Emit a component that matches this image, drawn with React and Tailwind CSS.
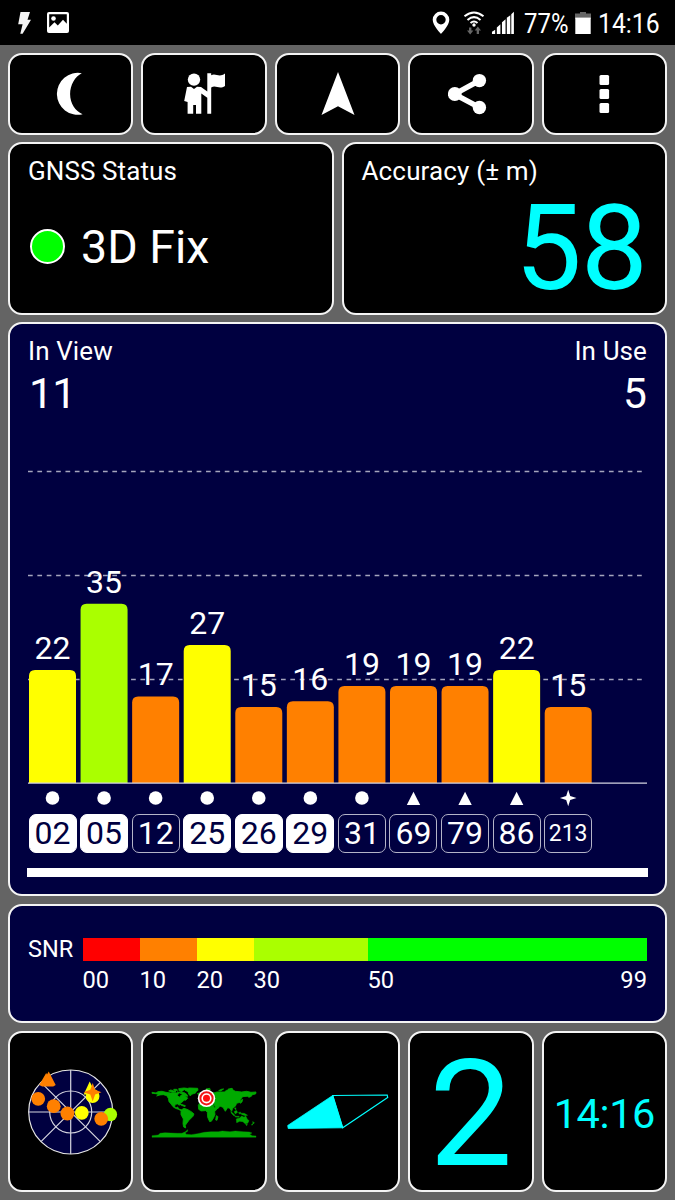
import React from "react";

const CARD = "rounded-[14px] border-2 border-[#f4f4f4]";
const ORANGE = "#ff8000";
const YELLOW = "#ffff00";
const LIME = "#aaff00";

const SATS = [
  { id: "02", snr: 22, top: 670, color: YELLOW, kind: "dot", used: true },
  { id: "05", snr: 35, top: 603.7, color: LIME, kind: "dot", used: true },
  { id: "12", snr: 17, top: 696.4, color: ORANGE, kind: "dot", used: false },
  { id: "25", snr: 27, top: 645, color: YELLOW, kind: "dot", used: true },
  { id: "26", snr: 15, top: 707, color: ORANGE, kind: "dot", used: true },
  { id: "29", snr: 16, top: 701.2, color: ORANGE, kind: "dot", used: true },
  { id: "31", snr: 19, top: 686, color: ORANGE, kind: "dot", used: false },
  { id: "69", snr: 19, top: 686, color: ORANGE, kind: "tri", used: false },
  { id: "79", snr: 19, top: 686, color: ORANGE, kind: "tri", used: false },
  { id: "86", snr: 22, top: 670, color: YELLOW, kind: "tri", used: false },
  { id: "213", snr: 15, top: 707, color: ORANGE, kind: "star", used: false },
];

function StatusBar() {
  return (
    <div className="flex h-[45px] items-center bg-black text-white">
      <svg className="ml-[17px] h-[24px] w-[16px]" viewBox="0 0 16 24" fill="#f4f4f4">
        <path d="M3.5 1H13L10.5 8.7H14L5.6 22.8H3.3L5.6 13.2H1.2Z" />
      </svg>
      <svg className="ml-[13px] h-[24px] w-[24px]" viewBox="0 0 24 24">
        <rect x="1" y="1" width="22" height="21" rx="2" fill="#fff" />
        <path d="M3.2 3.2H20.8V12.8L17 8.8L11.8 14.6L8.5 11.2L3.2 16.5Z" fill="#000" />
        <circle cx="7.5" cy="7.5" r="2.3" fill="#fff" />
      </svg>
      <div className="grow" />
      <svg className="h-[24px] w-[18px]" viewBox="0 0 18 24">
        <path fillRule="evenodd" fill="#fff" d="M9 .5a8.3 8.3 0 0 0-8.3 8.3C.7 14.6 9 23 9 23s8.300-8.400 8.300-14.200A8.300 8.300 0 0 0 9 .5ZM9 4.100a4.700 4.700 0 1 1 0 9.400a4.700 4.700 0 0 1 0-9.400Z" />
      </svg>
      <svg className="ml-[13px] h-[24px] w-[22px]" viewBox="0 0 22 24" fill="none">
        <g stroke="#fff" strokeWidth="2">
          <path d="M1.500 5.300Q11-2.300 20.500 5.300" />
          <path d="M4.500 8.900Q11 3.400 17.500 8.900" />
          <path d="M7.500 12.100Q11 9 14.500 12.100" />
        </g>
        <circle cx="11" cy="14" r="1.700" fill="#fff" />
        <g fill="#666">
          <path d="M6 16.500h2.400v3h2L7.200 23.500L4 19.500h2z" />
          <path d="M13.700 23v-3.500h-2l3.100-4l3.200 4h-2V23z" />
        </g>
      </svg>
      <svg className="ml-[6px] h-[24px] w-[24px]" viewBox="0 0 24 24" fill="#fff">
        <path d="M1 23v-2.200l3.300-2V23zM6 23v-6.500l3.700-3.300V23zM11.300 23V11.200l3.700-3V23zM16.300 23V6.800l3.600-2.600V23zM20.900 23V3.200L23.600 .8V23z" transform="scale(.97 1)" />
      </svg>
      <div className="ml-[8.500px] w-[45px] pt-[2px] text-[27.500px] leading-[43px]">
        <div className="w-[55px] origin-left scale-x-[0.87]">77%</div>
      </div>
      <svg className="ml-[6px] h-[24px] w-[16px]" viewBox="0 0 16 24">
        <path d="M5 1h6v1.500h5V8H0V2.500h5z" fill="#666" />
        <path d="M.3 6.600h15.400V23H.3z" fill="#fff" />
      </svg>
      <div className="mr-[15.500px] ml-[7px] w-[62px] pt-[2px] text-[27.500px] leading-[43px]">
        <div className="w-[70px] origin-left scale-x-[0.9]">14:16</div>
      </div>
    </div>
  );
}

function Toolbar() {
  const cell = CARD + " flex flex-1 items-center justify-center bg-black";
  return (
    <div className="flex h-[82px] gap-2">
      <div className={cell}>
        <svg className="h-[46px] w-[46px]" viewBox="47.700 71 46 46">
          <path d="M81.500 73.200A21 21 0 1 0 82.300 114.300C75 111 69.800 103.500 69.800 94C69.800 84.800 74.800 76.500 81.500 73.200Z" fill="#fff" />
        </svg>
      </div>
      <div className={cell}>
        <svg className="h-[46px] w-[46px]" viewBox="181 71 46 46" fill="#fff">
          <circle cx="194" cy="79.600" r="6.200" />
          <path d="M187 87L191 86.700L194 89L197 86.700L201 87L207.300 91.500V73.300H211.200V75.200C216 73 219 78 225 73.600V86C219 90 216 84.500 211.200 87.500V113.800H207.300V97.700L201.300 93.500V113.800H196V105H193.200V113.800H187.600V102L184.200 101Z" />
        </svg>
      </div>
      <div className={cell}>
        <svg className="h-[46px] w-[46px]" viewBox="314.500 71 46 46">
          <path d="M337.500 72L354 115L337.500 106.300L321 115Z" fill="#fff" />
        </svg>
      </div>
      <div className={cell}>
        <svg className="h-[46px] w-[46px]" viewBox="448 71 46 46" fill="#fff">
          <path d="M479.300 80.600L454.500 94.200L479.300 107.300" fill="none" stroke="#fff" strokeWidth="5.400" />
          <circle cx="479.400" cy="80.600" r="6.700" />
          <circle cx="454.800" cy="94" r="6.900" />
          <circle cx="479.400" cy="107.500" r="6.700" />
        </svg>
      </div>
      <div className={cell}>
        <svg className="h-[46px] w-[46px]" viewBox="581.500 71 46 46" fill="#fff">
          <rect x="600" y="75" width="9.600" height="10" rx="1.500" />
          <rect x="600" y="89" width="9.600" height="10" rx="1.500" />
          <rect x="600" y="103" width="9.600" height="10" rx="1.500" />
        </svg>
      </div>
    </div>
  );
}

function Marker({ kind, x }) {
  if (kind === "dot") return <circle cx={x} cy="798" r="6.800" fill="#fff" />;
  if (kind === "tri") return <path transform={`translate(${x} 798)`} d="M0-6.300L6.700 7H-6.700Z" fill="#fff" />;
  return <path transform={`translate(${x} 798)`} d="M0-8.300L2-2L8.300 0L2 2L0 8.300L-2 2L-8.300 0L-2-2Z" fill="#fff" />;
}

function Chart() {
  return (
    <svg className="block h-[390px] w-[655px] shrink-0" viewBox="10 420 655 390">
      {[471.500, 575.500, 679.500].map((y) => (
        <path key={y} d={`M28 ${y}H643`} stroke="#a5a5bd" strokeWidth="1.500" strokeDasharray="4.700 4.670" />
      ))}
      <g fontFamily="Roboto, sans-serif" fontSize="32" fill="#fff" textAnchor="middle">
        {SATS.map((s, i) => {
          const x = 29 + i * 51.570;
          return (
            <g key={s.id}>
              <path d={`M${x} 783V${s.top + 6}q0-6 6-6h35q6 0 6 6V783z`} fill={s.color} />
              <text x={x + 23.500} y={s.top - 11}>{s.snr}</text>
              <Marker kind={s.kind} x={x + 23.500} />
            </g>
          );
        })}
      </g>
      <path d="M28 783.200H647" stroke="#d5d5e2" strokeWidth="1.200" />
    </svg>
  );
}

function SatPanel() {
  return (
    <div className={CARD + " flex h-[574px] flex-col bg-[#000040]"}>
      <div className="flex justify-between px-[18px] pt-[11px]">
        <div>
          <div className="text-[26px] leading-[32px] tracking-[0.1px]">In View</div>
          <div className="pl-[1px] text-[43px] leading-[53px] tracking-[-0.800px]">11</div>
        </div>
        <div className="text-right">
          <div className="text-[26px] leading-[32px] tracking-[0.1px]">In Use</div>
          <div className="text-[42.500px] leading-[53px]">5</div>
        </div>
      </div>
      <Chart />
      <div className="mt-[4px] flex gap-[3.570px] pl-[18.500px]">
        {SATS.map((s) => (
          <div
            key={s.id}
            className={
              "flex h-[39px] w-[48px] shrink-0 items-center justify-center rounded-[7px] border leading-[37px] " +
              (s.used ? "border-white bg-white text-[#000040] " : "border-[#b4b4c8] text-white ") +
              (s.id.length > 2 ? "text-[23px]" : "text-[32px]")
            }
          >
            {s.id}
          </div>
        ))}
      </div>
      <div className="mx-[17px] mt-[15px] h-[8.500px] bg-white" />
    </div>
  );
}

function SnrPanel() {
  return (
    <div className={CARD + " flex h-[119px] bg-[#000040] pt-[32px] pl-[18px] text-[23.700px] leading-[24px]"}>
      <div className="w-[54.500px] text-[23.500px] leading-[22px]">SNR</div>
      <div className="w-[564.500px]">
        <div className="flex h-[23px]">
          <div className="w-[57px] bg-[#ff0000]" />
          <div className="w-[57px] bg-[#ff8000]" />
          <div className="w-[57px] bg-[#ffff00]" />
          <div className="w-[114px] bg-[#aaff00]" />
          <div className="grow bg-[#00ff00]" />
        </div>
        <div className="flex pt-[7px] leading-[24px]">
          <div className="w-[57px]">00</div>
          <div className="w-[57px]">10</div>
          <div className="w-[57px]">20</div>
          <div className="w-[114px]">30</div>
          <div className="grow">50</div>
          <div>99</div>
        </div>
      </div>
    </div>
  );
}

function SkyPlot() {
  return (
    <svg className="h-[100px] w-[110px]" viewBox="15.800 1061.500 110 100">
      <circle cx="70.500" cy="1111.500" r="42" fill="#000040" stroke="#e6e6e6" strokeWidth="1.200" />
      <g fill="none" stroke="#d5d5df" strokeWidth="1.200">
        <circle cx="70.500" cy="1111.500" r="21" />
        <path d="M28.500 1111.500h84M70.500 1069.500v84M40.800 1081.800l59.400 59.400M40.800 1141.200l59.400-59.400" />
      </g>
      <g fill={ORANGE}>
        <path d="M39 1084.500L46 1072.500L46.800 1074L48.500 1071L55.500 1084.500L53 1086H42Z" />
        <circle cx="38" cy="1098.300" r="6.900" />
        <circle cx="53.500" cy="1105.700" r="6.900" />
        <circle cx="67.200" cy="1113" r="6.900" />
      </g>
      <circle cx="110.200" cy="1114" r="6.700" fill={LIME} />
      <circle cx="101" cy="1118.300" r="6.900" fill={ORANGE} />
      <circle cx="81.600" cy="1112.300" r="6.900" fill={YELLOW} />
      <circle cx="92.400" cy="1095.500" r="6.900" fill={YELLOW} />
      <path d="M89.500 1081L96 1094H83.500Z" fill={YELLOW} />
      <path d="M92.500 1082.500L94.900 1089.300L101.300 1091.700L94.900 1094.100L92.500 1101L90.100 1094.100L83.200 1091.700L90.100 1089.300Z" fill={ORANGE} />
    </svg>
  );
}

function WorldMap() {
  return (
    <svg className="h-[80px] w-[110px]" viewBox="9 1.700 110 80">
      <g transform="scale(.33333)" fill="#00aa00" stroke="#00aa00" strokeWidth="2.500">
        <path d="M36 66L48 68L54 64L66 63L78 66L92 68L106 67L116 69L112 75L118 81L124 74L130 73L140 80L143 84L137 90L132 89L128 94L122 98L120 101L118 105L113 101L106 102L104 108L108 113L113 110L116 116L123 118L128 121L123 121L115 117L106 114L99 109L93 101L87 94L85 84L80 76L70 73L60 74L50 77L55 72L46 70L36 69Z" />
        <path d="M86 62L92 59L100 61L108 64L98 66ZM101 57L110 57L113 60L104 61ZM116 55L132 53L140 54L131 59L126 64L118 62ZM111 65L120 66L133 67L141 73L143 78L134 76L124 70ZM136 56L148 53L173 54L174 60L168 64L167 68L155 72L151 77L146 71L144 64L135 60Z" />
        <path d="M172 70L179 68L181 72L176 73ZM121 101L130 104L136 106L135 109L122 104Z" />
        <path d="M125 118L132 114L141 117L149 121L158 127L162 131L159 138L154 143L147 150L141 158L136 165L137 173L131 170L129 160L130 146L123 133L123 124Z" />
        <path d="M175 105L179 98L186 95L198 97L207 99L217 99L223 112L233 114L224 124L225 133L220 144L214 153L209 154L203 141L202 126L197 121L183 122L176 117ZM229 136L234 139L231 150L227 149Z" />
        <path d="M179 94L182 87L186 82L195 76L200 69L209 63L221 68L231 65L241 65L253 65L260 60L273 56L286 63L305 65L320 63L333 66L348 65L347 71L337 73L334 78L327 81L322 78L308 79L301 88L300 96L290 99L286 108L278 114L275 123L269 114L263 112L256 123L249 111L239 107L236 113L229 116L222 102L213 98L202 92L193 91L186 96Z" />
        <path d="M236 61L244 57L251 56L242 62ZM198 56L209 54L211 58L202 59ZM264 57L276 54L279 57ZM303 90L308 87L306 95L301 99Z" />
        <path d="M272 123L279 129L286 136L281 136L274 129ZM282 124L289 120L293 126L286 131ZM295 127L302 125L300 132ZM299 128L313 129L323 135L316 136L306 133ZM284 138L298 138L296 141L286 140ZM283 114L288 112L288 119Z" strokeWidth="1" />
        <path d="M289 146L299 143L305 137L312 141L317 137L322 147L327 151L323 159L315 160L309 154L299 153L290 157ZM317 162L322 162L320 166ZM338 154L343 157L340 161ZM335 162L339 160L336 165Z" strokeWidth="1.500" />
        <path d="M36 196L55 194L60 189L75 187L91 188L112 189L126 189L136 184L143 178L143 183L136 187L138 192L154 193L173 190L193 186L213 184L235 184L247 182L270 184L286 182L310 184L328 185L336 188L329 192L337 196L348 197V201H36Z" strokeWidth="1" />
      </g>
      <circle cx="66.500" cy="28" r="8.700" fill="#fff" />
      <circle cx="66.500" cy="28" r="6.100" fill="none" stroke="#f01818" strokeWidth="2" />
      <circle cx="66.500" cy="28" r="3.500" fill="#ff1010" />
    </svg>
  );
}

function BottomRow() {
  const cell = CARD + " flex flex-1 items-center justify-center bg-black text-[#00ffff]";
  return (
    <div className="flex h-[161px] gap-2">
      <div className={cell}>
        <SkyPlot />
      </div>
      <div className={cell}>
        <WorldMap />
      </div>
      <div className={cell}>
        <svg className="h-[50px] w-[110px]" viewBox="282.800 1087 110 50">
          <path d="M332.500 1095.500L342.500 1127.800L288 1128.500L287.500 1125.500Z" fill="#00ffff" stroke="#00ffff" strokeWidth=".8" />
          <path d="M332.500 1095.500L387 1095L387.500 1097.500L342.500 1127.800Z" fill="none" stroke="#00ffff" strokeWidth="1.200" />
        </svg>
      </div>
      <div className={cell + " pt-[4px] text-[149px] leading-[150px]"}>2</div>
      <div className={cell + " pt-[4px] text-[41.500px] leading-[50px] tracking-[-0.400px]"}>14:16</div>
    </div>
  );
}

export default function App() {
  return (
    <div className="h-[1200px] w-[675px] bg-[#646464] font-[Roboto,sans-serif] text-white">
      <StatusBar />
      <div className="flex flex-col px-2 pt-2">
        <Toolbar />
        <div className="mt-[7px] flex h-[173px] gap-2">
          <div className={CARD + " flex-1 bg-black px-[18px] pt-[11px]"}>
            <div className="text-[26px] leading-[32px] tracking-[0.1px]">GNSS Status</div>
            <div className="mt-[32px] flex items-center gap-[16px] pl-[2px]">
              <div className="h-[35px] w-[35px] rounded-full border-2 border-white bg-[#00ff00]" />
              <div className="pt-px text-[46.500px] leading-[54px]">3D Fix</div>
            </div>
          </div>
          <div className={CARD + " flex-1 bg-black px-[18px] pt-[11px]"}>
            <div className="text-[26px] leading-[32px] tracking-[0.15px]">Accuracy (± m)</div>
            <div className="text-right text-[119.500px] leading-[123px] tracking-[-1px] text-[#00ffff]">58</div>
          </div>
        </div>
        <div className="mt-[7px]">
          <SatPanel />
        </div>
        <div className="mt-2">
          <SnrPanel />
        </div>
        <div className="mt-2">
          <BottomRow />
        </div>
      </div>
    </div>
  );
}
